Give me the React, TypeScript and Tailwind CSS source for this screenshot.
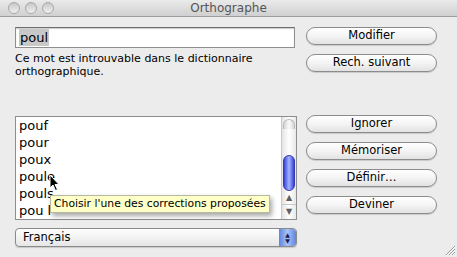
import { ReactNode } from "react";

const font = { fontFamily: '"DejaVu Sans", "Liberation Sans", sans-serif' };

function Button({ children }: { children: ReactNode }) {
  return (
    <div className="flex h-[18px] w-[131px] items-center justify-center rounded-full border border-[#8c8c8c] bg-gradient-to-b from-[#ffffff] via-[#f4f4f4] to-[#e2e2e2] text-[11.5px] text-black shadow-[0_1px_1px_rgba(0,0,0,0.15)]">
      {children}
    </div>
  );
}

function Light() {
  return (
    <div className="h-[12px] w-[12px] rounded-full border border-[#a8a8a8] bg-gradient-to-b from-[#c8c8c8] to-[#f0f0f0]" />
  );
}

function Scrollbar() {
  return (
    <div className="flex w-[15px] flex-col border-l border-[#c8c8c8] bg-gradient-to-r from-[#e4e4e4] via-[#ffffff] to-[#e8e8e8]">
      <div className="mx-[1px] mt-[2px] h-[10px] rounded-t-full border border-b-0 border-[#b8b8b8] bg-gradient-to-r from-[#d8d8d8] via-[#fafafa] to-[#d8d8d8]" />
      <div className="flex-1" />
      <div className="mx-[1px] h-[36px] rounded-full border border-[#3a3ab0] bg-gradient-to-r from-[#3b3bd8] via-[#a8b4ff] to-[#3b3bd8]" />
      <div className="flex h-[14px] items-center justify-center border-b border-[#c8c8c8] text-[8px] leading-none text-[#606060]">
        ▲
      </div>
      <div className="flex h-[14px] items-center justify-center text-[8px] leading-none text-[#606060]">
        ▼
      </div>
    </div>
  );
}

const words = ["pouf", "pour", "poux", "poule", "pouls", "pou l"];

export default function App() {
  return (
    <div className="relative h-[257px] w-[457px] overflow-hidden bg-[#ececec]" style={font}>
      {/* title bar */}
      <div className="relative flex h-[17px] items-center border-b border-[#9e9e9e] bg-gradient-to-b from-[#eaeaea] to-[#d0d0d0]">
        <div className="ml-[8px] flex gap-[5px]">
          <Light />
          <Light />
          <Light />
        </div>
        <div className="absolute inset-0 flex items-center justify-center text-[12px] text-[#555555]">
          Orthographe
        </div>
      </div>

      <div className="flex gap-[9px] pl-[15px] pt-[10px]">
        {/* left column */}
        <div className="flex w-[282px] flex-col">
          <div className="flex h-[21px] w-[280px] items-center border border-[#8e8e8e] border-t-[#6e6e6e] bg-white pl-[3px] shadow-[inset_0_1px_1px_rgba(0,0,0,0.2)]">
            <span className="bg-[#c8c8c8] px-[1px] text-[13px] leading-[17px] text-black">poul</span>
          </div>
          <div className="mt-[4px] text-[11px] leading-[13px] text-black">
            Ce mot est introuvable dans le dictionnaire
            <br />
            orthographique.
          </div>
          <div className="mt-[38px] flex h-[104px] border border-[#8e8e8e] bg-white">
            <div className="flex-1 pl-[3px]">
              {words.map((w) => (
                <div key={w} className="h-[17px] text-[13px] leading-[17px] text-black">
                  {w}
                </div>
              ))}
            </div>
            <Scrollbar />
          </div>
          <div className="mt-[8px] flex h-[19px] overflow-hidden rounded-[4px] border border-[#8a8a8a] bg-gradient-to-b from-[#ffffff] to-[#e6e6e6] shadow-[0_1px_1px_rgba(0,0,0,0.15)]">
            <div className="flex flex-1 items-center pl-[7px] text-[11.5px] text-black">Français</div>
            <div className="flex w-[17px] flex-col items-center justify-center rounded-r-[3px] bg-gradient-to-r from-[#5e84e0] via-[#a9c3f4] to-[#5e84e0] text-[6px] leading-[6px] text-[#1a1a50]">
              <span>▲</span>
              <span>▼</span>
            </div>
          </div>
        </div>

        {/* right column */}
        <div className="flex flex-col">
          <Button>Modifier</Button>
          <div className="mt-[9px]">
            <Button>Rech. suivant</Button>
          </div>
          <div className="mt-[43px] flex flex-col gap-[9px]">
            <Button>Ignorer</Button>
            <Button>Mémoriser</Button>
            <Button>Définir…</Button>
            <Button>Deviner</Button>
          </div>
        </div>
      </div>

      {/* tooltip */}
      <div className="absolute left-[50px] top-[195px] flex h-[18px] items-center border border-[#b8b8a0] bg-[#ffffc8] px-[3px] text-[10.8px] text-black shadow-[2px_3px_5px_rgba(0,0,0,0.35)]">
        Choisir l'une des corrections proposées
      </div>

      {/* cursor */}
      <svg className="absolute left-[49px] top-[174px]" width="12" height="18" viewBox="0 0 12 18">
        <path d="M1 1 L1 14 L4 11 L6.5 16.5 L8.5 15.5 L6 10.5 L10 10.5 Z" fill="#000" stroke="#fff" strokeWidth="1" />
      </svg>

      {/* resize grip */}
      <svg className="absolute bottom-[1px] right-[1px]" width="12" height="12" viewBox="0 0 12 12">
        <path d="M11 2 L2 11 M11 5 L5 11 M11 8 L8 11" stroke="#9a9a9a" strokeWidth="1" />
        <path d="M11 3 L3 11 M11 6 L6 11 M11 9 L9 11" stroke="#ffffff" strokeWidth="1" />
      </svg>
    </div>
  );
}
